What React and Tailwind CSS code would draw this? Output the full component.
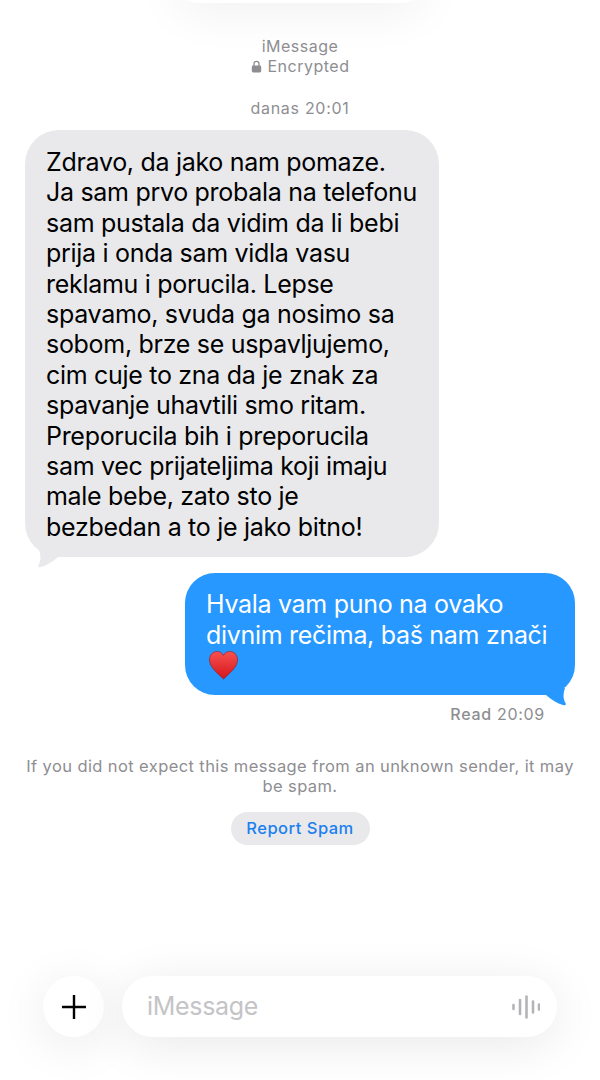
const received = [
  'Zdravo, da jako nam pomaze.',
  'Ja sam prvo probala na telefonu',
  'sam pustala da vidim da li bebi',
  'prija i onda sam vidla vasu',
  'reklamu i porucila. Lepse',
  'spavamo, svuda ga nosimo sa',
  'sobom, brze se uspavljujemo,',
  'cim cuje to zna da je znak za',
  'spavanje uhavtili smo ritam.',
  'Preporucila bih i preporucila',
  'sam vec prijateljima koji imaju',
  'male bebe, zato sto je',
  'bezbedan a to je jako bitno!',
]

const Heart = () => (
  <svg width="31" height="30" viewBox="0 0 32 31" className="block">
    <defs>
      <linearGradient id="heart" x1="0" y1="0" x2="0" y2="1">
        <stop offset="0" stopColor="#f8504f" />
        <stop offset="1" stopColor="#d4161c" />
      </linearGradient>
    </defs>
    <path d="M16 30C10 24 1.500 18 1.500 10C1.500 5 5 1.500 9.500 1.500C12.300 1.500 14.800 3 16 5.700C17.200 3 19.700 1.500 22.500 1.500C27 1.500 30.500 5 30.500 10C30.500 18 22 24 16 30Z" fill="url(#heart)" stroke="#8f1a1c" strokeWidth="0.6" />
  </svg>
)

const LockIcon = () => (
  <svg width="11" height="13" viewBox="0 0 11 13" fill="none">
    <path d="M3 6V3.800C3 2.300 4 1.300 5.500 1.300S8 2.300 8 3.800V6" stroke="#8e8e92" strokeWidth="1.300" />
    <rect x="0.800" y="5.500" width="9.400" height="7" rx="1.400" fill="#8e8e92" />
  </svg>
)

const PlusIcon = () => (
  <svg width="24" height="24" viewBox="0 0 24 24" stroke="#000" strokeWidth="2.400">
    <path d="M0 12h24M12 0v24" />
  </svg>
)

const Waveform = () => (
  <svg width="28" height="24" viewBox="0 0 28 24" stroke="#b4b4b8" strokeWidth="2.600" strokeLinecap="round">
    <path d="M1.500 10v4M8 5v14M14.500 1.500v21M21 6.500v11M27 9.500v5" />
  </svg>
)

const Tail = ({ fill, className }) => (
  <svg className={className} width="24" height="18" viewBox="0 0 24 18">
    <path d="M3 0C5 6 5 11 2.500 15C1.500 17 3 17.600 5 17C11 15.500 16 12 22 7L24 0Z" fill={fill} />
  </svg>
)

export default function App() {
  return (
    <div className="relative h-[1080px] w-[600px] overflow-hidden bg-white font-['Inter',sans-serif]">
      {/* cut off pill at the very top */}
      <div className="absolute left-[176px] top-[-40px] h-[43px] w-[248px] rounded-[24px] bg-white shadow-[0_6px_50px_rgba(0,0,0,0.07)]" />

      <div className="relative flex flex-col pt-[36px]">
        <div className="text-center text-[16px] leading-[20px] tracking-[0.5px] text-[#8e8e92]">
          <div>iMessage</div>
          <div className="flex items-center justify-center gap-[6px]">
            <LockIcon />
            <span>Encrypted</span>
          </div>
        </div>

        <div className="mt-[22px] text-center text-[16px] leading-[20px] tracking-[0.7px] text-[#8e8e92]">danas 20:01</div>

        <div className="relative ml-[25px] mt-[12px] w-[414px] rounded-[34px] bg-[#e9e9eb] pb-[15px] pl-[21px] pt-[17px]">
          <div className="text-[25px] leading-[30.400px] tracking-[-0.3px] text-black">
            {received.map((line) => (
              <div key={line} className="whitespace-nowrap">{line}</div>
            ))}
          </div>
          <Tail fill="#e9e9eb" className="absolute bottom-[-11px] left-[11px]" />
        </div>

        <div className="relative ml-[185px] mt-[16px] h-[122px] w-[390px] rounded-[30px] bg-[#2698ff] pl-[21px] pt-[16px]">
          <div className="whitespace-nowrap text-[25px] leading-[30.400px] tracking-[-0.3px] text-white">
            <div>Hvala vam puno na ovako</div>
            <div>divnim rečima, baš nam znači</div>
          </div>
          <div className="ml-[2px]"><Heart /></div>
          <Tail fill="#2698ff" className="absolute bottom-[-11px] right-[7px] -scale-x-100" />
        </div>

        <div className="mr-[55px] mt-[9px] text-right text-[16px] leading-[20px] tracking-[0.7px] text-[#8e8e92]">
          <span className="font-medium">Read</span> 20:09
        </div>

        <div className="mt-[32px] text-center text-[16.500px] leading-[20px] tracking-[0.4px] text-[#8e8e92]">
          <div className="whitespace-nowrap">If you did not expect this message from an unknown sender, it may</div>
          <div>be spam.</div>
        </div>

        <div className="mt-[16px] flex justify-center">
          <div className="flex h-[33px] w-[139px] items-center justify-center rounded-full bg-[#e9e9eb] text-[16.500px] font-medium tracking-[0.5px] text-[#1a80f0]">
            Report Spam
          </div>
        </div>
      </div>

      {/* input bar floats over the conversation */}
      <div className="absolute left-[43px] top-[976px] flex gap-[18px]">
        <div className="flex h-[61px] w-[61px] items-center justify-center rounded-full bg-white shadow-[0_8px_50px_rgba(0,0,0,0.09)]">
          <PlusIcon />
        </div>
        <div className="flex h-[61px] w-[435px] items-center justify-between rounded-full bg-white pl-[25px] pr-[17px] shadow-[0_8px_50px_rgba(0,0,0,0.09)]">
          <span className="text-[25px] tracking-[-0.3px] text-[#c4c4c7]">iMessage</span>
          <Waveform />
        </div>
      </div>
    </div>
  )
}
